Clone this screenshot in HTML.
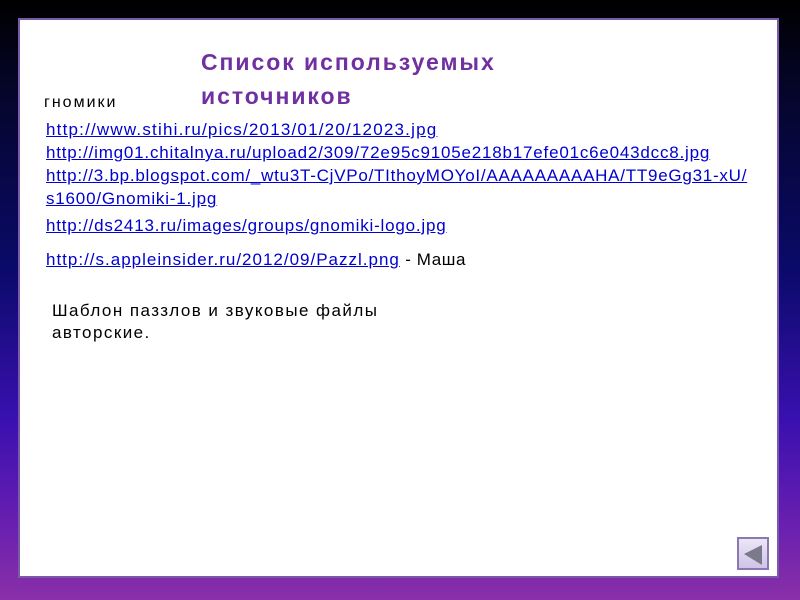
<!DOCTYPE html>
<html><head><meta charset="utf-8"><style>
html,body{margin:0;padding:0}
body{width:800px;height:600px;position:relative;overflow:hidden;
background:linear-gradient(to bottom,#000 0%,#05052a 15%,#0a0a6a 45%,#3a10b0 70%,#6a20b0 88%,#8a30a8 100%);
font-family:"Liberation Sans",sans-serif}
.panel{position:absolute;left:18px;top:18px;width:761px;height:560px;background:#fff;border:2px solid #7a5aa8;box-sizing:border-box}
.t{position:absolute;left:201px;top:45px;color:#7030a0;font-weight:bold;font-size:23px;line-height:34px;letter-spacing:1.95px}
.g{position:absolute;left:44px;top:94px;font-size:16px;color:#000;letter-spacing:2px}
.l{position:absolute;left:46px;font-size:17px;color:#0000d0;text-decoration:underline;letter-spacing:0.8px;white-space:nowrap;line-height:20px}
.p{position:absolute;left:52px;top:300px;font-size:17px;line-height:22px;color:#000;letter-spacing:1.45px}
.btn{position:absolute;left:737px;top:537px;width:32px;height:33px;box-sizing:border-box;border:2px solid #8a78b0;background:linear-gradient(#ece6f6,#cfc4e8)}
</style></head><body>
<div class="panel"></div>
<div class="t">Список используемых<br>источников</div>
<div class="g">гномики</div>
<div class="l" style="top:120px;letter-spacing:1.2px">http://www.stihi.ru/pics/2013/01/20/12023.jpg</div>
<div class="l" style="top:143px">http://img01.chitalnya.ru/upload2/309/72e95c9105e218b17efe01c6e043dcc8.jpg</div>
<div class="l" style="top:166px;letter-spacing:0.75px">http://3.bp.blogspot.com/_wtu3T-CjVPo/TIthoyMOYoI/AAAAAAAAAHA/TT9eGg31-xU/</div>
<div class="l" style="top:189px">s1600/Gnomiki-1.jpg</div>
<div class="l" style="top:216px">http://ds2413.ru/images/groups/gnomiki-logo.jpg</div>
<div class="l" style="top:250px;letter-spacing:1px">http://s.appleinsider.ru/2012/09/Pazzl.png<span style="color:#000;text-decoration:none;display:inline-block;font-size:17px;letter-spacing:0.6px">&nbsp;- Маша</span></div>
<div class="p">Шаблон паззлов и звуковые файлы<br>авторские.</div>
<div class="btn"><svg width="28" height="29" viewBox="0 0 28 29"><polygon points="5,15 23,6 23,26" fill="#7a7a8a"/></svg></div>
</body></html>
